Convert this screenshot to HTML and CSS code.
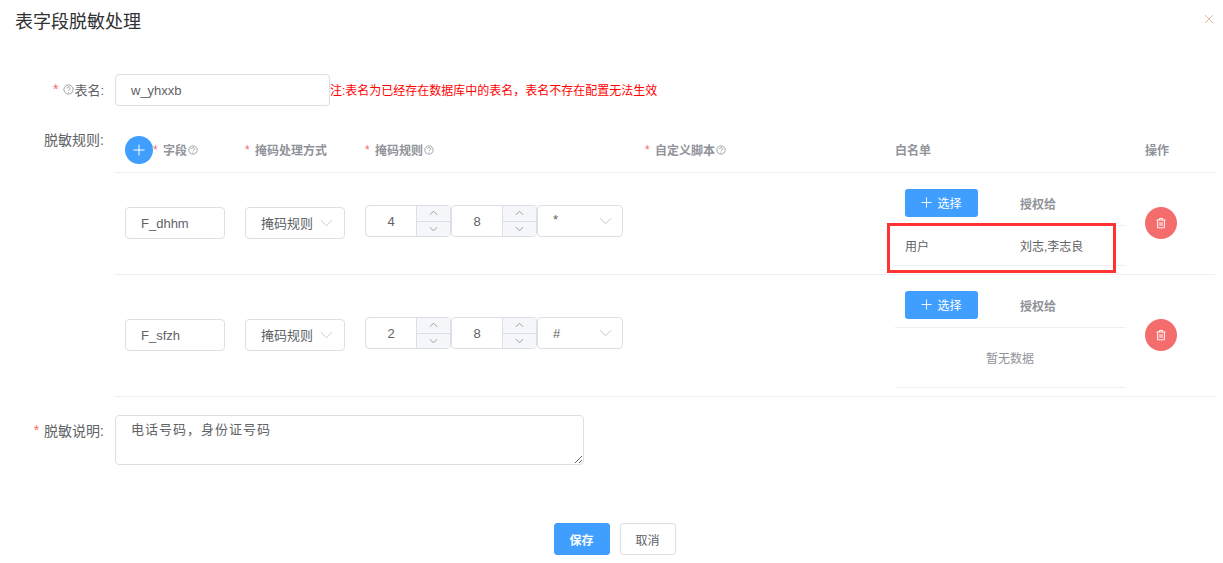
FILE: index.html
```html
<!DOCTYPE html>
<html lang="zh">
<head>
<meta charset="utf-8">
<title>表字段脱敏处理</title>
<link rel="stylesheet" href="styles.css">
</head>
<body>
<div class="dialog">
  <header class="dialog-head">
    <h1 class="dialog-title">表字段脱敏处理</h1>
    <svg class="close-icon" viewBox="0 0 10 10" width="10" height="10"><path d="M1 1L9 9M9 1L1 9"/></svg>
  </header>

  <div class="form-row row-name">
    <div class="form-label name-label"><span class="req">*</span><svg class="help" viewBox="0 0 12 12"><circle cx="6" cy="6" r="5"/><path d="M4.3 4.8a1.7 1.7 0 1 1 2.6 1.4c-.6.4-.9.7-.9 1.3M6 8.6v.9"/></svg>表名:</div>
    <div class="form-body name-body">
      <div class="input name-input">w_yhxxb</div>
      <span class="note">注:表名为已经存在数据库中的表名，表名不存在配置无法生效</span>
    </div>
  </div>

  <div class="form-row row-rules">
    <div class="form-label rules-label">脱敏规则:</div>
    <div class="rules">
      <div class="rule-grid rule-head">
        <div class="th first-th">
          <span class="add-btn"><svg viewBox="0 0 12 12" width="12" height="12"><path d="M6 .5v11M.5 6h11"/></svg></span>
          <span class="req-th">*</span><span class="th-text">字段</span><svg class="help" viewBox="0 0 12 12"><circle cx="6" cy="6" r="5"/><path d="M4.3 4.8a1.7 1.7 0 1 1 2.6 1.4c-.6.4-.9.7-.9 1.3M6 8.6v.9"/></svg>
        </div>
        <div class="th"><span class="req-th">*</span><span class="th-text">掩码处理方式</span></div>
        <div class="th"><span class="req-th">*</span><span class="th-text">掩码规则</span><svg class="help" viewBox="0 0 12 12"><circle cx="6" cy="6" r="5"/><path d="M4.3 4.8a1.7 1.7 0 1 1 2.6 1.4c-.6.4-.9.7-.9 1.3M6 8.6v.9"/></svg></div>
        <div class="th"><span class="req-th">*</span><span class="th-text">自定义脚本</span><svg class="help" viewBox="0 0 12 12"><circle cx="6" cy="6" r="5"/><path d="M4.3 4.8a1.7 1.7 0 1 1 2.6 1.4c-.6.4-.9.7-.9 1.3M6 8.6v.9"/></svg></div>
        <div class="th"><span class="th-text">白名单</span></div>
        <div class="th"><span class="th-text">操作</span></div>
      </div>

      <div class="rule-grid rule-row">
        <div class="td"><div class="input field-input">F_dhhm</div></div>
        <div class="td"><div class="input select-input"><span class="select-text">掩码规则</span><svg class="chev" viewBox="0 0 14 8"><path d="M1 1l6 6 6-6"/></svg></div></div>
        <div class="td mask-cell">
          <div class="num"><span class="num-val">4</span><span class="steps"><span class="step"><svg viewBox="0 0 10 6"><path d="M1 5l4-4 4 4"/></svg></span><span class="step step-down"><svg viewBox="0 0 10 6"><path d="M1 1l4 4 4-4"/></svg></span></span></div>
          <div class="num"><span class="num-val">8</span><span class="steps"><span class="step"><svg viewBox="0 0 10 6"><path d="M1 5l4-4 4 4"/></svg></span><span class="step step-down"><svg viewBox="0 0 10 6"><path d="M1 1l4 4 4-4"/></svg></span></span></div>
          <div class="input char-select"><span class="char-val char-star">*</span><svg class="chev" viewBox="0 0 14 8"><path d="M1 1l6 6 6-6"/></svg></div>
        </div>
        <div class="td"></div>
        <div class="td white-cell">
          <div class="white-head">
            <span class="pick-btn"><svg viewBox="0 0 12 12" width="11" height="11"><path d="M6 .5v11M.5 6h11"/></svg>选择</span>
            <span class="grant">授权给</span>
          </div>
          <div class="white-row"><span class="white-type">用户</span><span class="white-names">刘志,李志良</span></div>
          <div class="mark-box"></div>
        </div>
        <div class="td"><span class="del-btn"><svg viewBox="0 0 12 12" width="12" height="12"><path d="M1.5 3h9M4.5 3V1.4h3V3M2.6 3v7.8h6.8V3M5 5v4M7 5v4"/></svg></span></div>
      </div>

      <div class="rule-grid rule-row">
        <div class="td"><div class="input field-input">F_sfzh</div></div>
        <div class="td"><div class="input select-input"><span class="select-text">掩码规则</span><svg class="chev" viewBox="0 0 14 8"><path d="M1 1l6 6 6-6"/></svg></div></div>
        <div class="td mask-cell">
          <div class="num"><span class="num-val">2</span><span class="steps"><span class="step"><svg viewBox="0 0 10 6"><path d="M1 5l4-4 4 4"/></svg></span><span class="step step-down"><svg viewBox="0 0 10 6"><path d="M1 1l4 4 4-4"/></svg></span></span></div>
          <div class="num"><span class="num-val">8</span><span class="steps"><span class="step"><svg viewBox="0 0 10 6"><path d="M1 5l4-4 4 4"/></svg></span><span class="step step-down"><svg viewBox="0 0 10 6"><path d="M1 1l4 4 4-4"/></svg></span></span></div>
          <div class="input char-select"><span class="char-val">#</span><svg class="chev" viewBox="0 0 14 8"><path d="M1 1l6 6 6-6"/></svg></div>
        </div>
        <div class="td"></div>
        <div class="td white-cell">
          <div class="white-head">
            <span class="pick-btn"><svg viewBox="0 0 12 12" width="11" height="11"><path d="M6 .5v11M.5 6h11"/></svg>选择</span>
            <span class="grant">授权给</span>
          </div>
          <div class="white-empty">暂无数据</div>
        </div>
        <div class="td"><span class="del-btn"><svg viewBox="0 0 12 12" width="12" height="12"><path d="M1.5 3h9M4.5 3V1.4h3V3M2.6 3v7.8h6.8V3M5 5v4M7 5v4"/></svg></span></div>
      </div>
    </div>
  </div>

  <div class="form-row row-desc">
    <div class="form-label desc-label"><span class="req">*</span>脱敏说明:</div>
    <div class="form-body">
      <textarea class="desc" readonly>电话号码，身份证号码</textarea>
    </div>
  </div>

  <footer class="dialog-foot">
    <span class="btn btn-primary">保存</span>
    <span class="btn">取消</span>
  </footer>
</div>
</body>
</html>
```
FILE: styles.css
```css
* { box-sizing: border-box; }
html, body { margin: 0; padding: 0; background: #fff; }
body {
  width: 1223px;
  height: 563px;
  overflow: hidden;
  font-family: "Liberation Sans", "Noto Sans CJK SC", sans-serif;
  font-size: 13px;
  color: #606266;
}
.dialog { display: flex; flex-direction: column; padding-bottom: 8px; }
.dialog-head { display: flex; justify-content: space-between; align-items: flex-start; height: 74px; padding: 10px 9px 0 15px; }
.dialog-title { margin: 0; font-size: 18px; font-weight: 400; line-height: 24px; color: #303133; }
.close-icon { margin-top: 4px; fill: none; stroke: #e8b99a; stroke-width: 1; }

.form-row { display: flex; }
.form-label {
  width: 104px;
  flex: none;
  margin-right: 11px;
  display: flex;
  justify-content: flex-end;
  align-items: center;
  height: 32px;
  font-size: 14px;
}
.name-label { font-size: 13px; height: 30px; }
.req { color: #f56c6c; margin-right: 5px; font-size: 14px; }
.help { width: 11px; height: 11px; flex: none; fill: none; stroke: #909399; stroke-width: 1; }
.form-label .help { margin-right: 0; }

.form-body { flex: none; }
.name-body { display: flex; align-items: center; }
.input {
  height: 32px;
  border: 1px solid #dcdfe6;
  border-radius: 4px;
  background: #fff;
  display: flex;
  align-items: center;
  padding-left: 15px;
  font-size: 13px;
  color: #606266;
}
.name-input { width: 215px; }
.note { font-size: 12px; color: #f00; white-space: nowrap; margin-bottom: 2px; }

.row-rules { margin-top: 21px; }
.rules-label { height: 24px; }
.desc-label { height: 30px; }
.rules { width: 1100px; flex: none; }
.rule-grid { display: grid; grid-template-columns: 120px 120px 280px 250px 250px 80px; }
.rule-head { height: 46px; border-bottom: 1px solid #ebeef5; }
.th { display: flex; align-items: center; padding-left: 10px; font-size: 12px; font-weight: 700; color: #909399; }
.req-th { color: #f56c6c; font-weight: 400; margin-right: 4px; width: 6px; }
.th-text { white-space: nowrap; }
.th .help { margin-left: 1px; width: 10px; height: 10px; }
.first-th { padding-top: 0; }
.add-btn {
  width: 28px;
  height: 28px;
  flex: none;
  border-radius: 50%;
  background: #409eff;
  display: flex;
  align-items: center;
  justify-content: center;
}
.add-btn svg, .pick-btn svg { fill: none; stroke: #fff; stroke-width: 1; }

.rule-row { border-bottom: 1px solid #ebeef5; }
.td { display: flex; align-items: center; padding: 0 10px 1px; }
.field-input, .select-input { width: 100px; }
.select-input { justify-content: space-between; padding-right: 11px; white-space: nowrap; }
.select-text { margin-bottom: 2px; }
.chev { width: 13px; height: 8px; flex: none; fill: none; stroke: #c0c4cc; stroke-width: 1; }

.mask-cell { padding-bottom: 5px; }
.num {
  width: 86px;
  height: 32px;
  flex: none;
  border: 1px solid #dcdfe6;
  border-radius: 4px;
  display: flex;
  overflow: hidden;
}
.num-val { flex: 1; display: flex; align-items: center; justify-content: center; font-size: 13px; }
.steps { width: 34px; flex: none; display: flex; flex-direction: column; background: #f5f7fa; border-left: 1px solid #dcdfe6; }
.step { flex: 1; display: flex; align-items: center; justify-content: center; }
.step-down { border-top: 1px solid #dcdfe6; }
.step svg { width: 9px; height: 6px; fill: none; stroke: #909399; stroke-width: 1; }
.char-select { width: 86px; flex: none; justify-content: space-between; padding-right: 10px; }
.char-star { margin-bottom: 4px; }

.white-cell { position: relative; display: block; padding: 8px 10px; }
.white-head { height: 45px; border-bottom: 1px solid #ebeef5; display: flex; align-items: center; padding-left: 10px; }
.pick-btn {
  width: 73px;
  height: 28px;
  flex: none;
  background: #409eff;
  border-radius: 3px;
  color: #fff;
  font-size: 12px;
  display: flex;
  align-items: center;
  justify-content: center;
  gap: 5px;
  padding-bottom: 2px;
}
.grant { margin-left: 42px; font-size: 12px; font-weight: 700; color: #909399; padding-top: 1px; }
.white-row { height: 40px; border-bottom: 1px solid #ebeef5; display: flex; align-items: center; padding-left: 10px; font-size: 12px; padding-bottom: 1px; }
.white-type { width: 115px; flex: none; }
.white-empty { height: 60px; border-bottom: 1px solid #ebeef5; display: flex; align-items: center; justify-content: center; font-size: 12px; color: #909399; }
.mark-box { position: absolute; left: 2px; top: 50px; width: 229px; height: 50px; border: 3px solid #f33; pointer-events: none; }

.del-btn {
  width: 32px;
  height: 32px;
  border-radius: 50%;
  background: #f56c6c;
  display: flex;
  align-items: center;
  justify-content: center;
}
.del-btn svg { fill: none; stroke: #fff; stroke-width: 1; }

.row-desc { margin-top: 18px; }
.desc {
  display: block;
  width: 469px;
  height: 50px;
  margin: 0;
  padding: 3px 15px;
  border: 1px solid #dcdfe6;
  border-radius: 4px;
  outline: none;
  font-family: "Noto Sans CJK SC", sans-serif;
  font-size: 13px;
  letter-spacing: 1px;
  line-height: 20px;
  color: #606266;
}
.dialog-foot { display: flex; justify-content: center; gap: 10px; margin-top: 58px; padding-left: 6px; }
.btn {
  width: 56px;
  height: 32px;
  border: 1px solid #dcdfe6;
  border-radius: 3px;
  display: flex;
  align-items: center;
  justify-content: center;
  font-size: 12px;
  color: #606266;
}
.btn-primary { background: #409eff; border-color: #409eff; color: #fff; font-weight: 700; }
```
